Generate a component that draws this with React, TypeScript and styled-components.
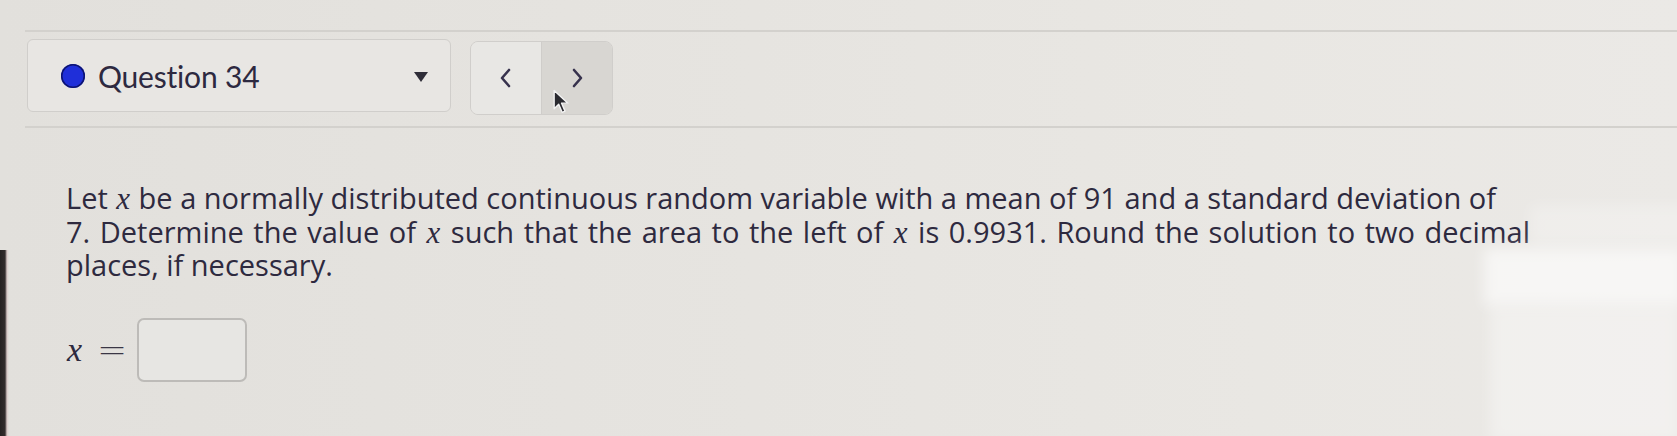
import React from "react";
import styled, { createGlobalStyle } from "styled-components";

const GlobalStyle = createGlobalStyle`
  html, body {
    margin: 0;
    padding: 0;
  }
  body {
    position: relative;
    width: 1677px;
    height: 436px;
    overflow: hidden;
    font-family: "Open Sans", "Lato", sans-serif;
    color: #2e2a3f;
    background:
      linear-gradient(90deg, #262222 0, #332d2d 5px, rgba(215,190,190,0.6) 7px, rgba(0,0,0,0) 9px) 0 250px / 10px 186px no-repeat,
      linear-gradient(90deg, #e2e0dc 0%, #e6e4e0 45%, #e9e7e3 75%, #ebe9e6 100%);
  }
`;

const Page = styled.div`
  padding-top: 30px;
`;

const Rule = styled.div<{ $gap: number }>`
  height: 2px;
  margin: 0 0 ${p => p.$gap}px 25px;
  background: #d3d1cd;
`;

const Toolbar = styled.div`
  display: flex;
  align-items: flex-start;
  gap: 19px;
  padding-left: 27px;
  margin-bottom: 11px;
`;

const Dropdown = styled.div`
  box-sizing: border-box;
  width: 424px;
  height: 73px;
  display: flex;
  align-items: center;
  padding: 0 22px 0 33px;
  border: 1.5px solid #d0cecb;
  border-radius: 6px;
  background: #e8e6e3;
`;

const StatusDot = styled.span`
  width: 24px;
  height: 24px;
  border-radius: 50%;
  background: #1f2fd9;
  box-shadow: inset 0 0 0 1.5px #0d1470;
  flex: none;
`;

const QuestionLabel = styled.span`
  margin-left: 13px;
  font-family: "Lato", sans-serif;
  font-size: 30px;
  letter-spacing: -0.2px;
  color: #2d2940;
  flex: 1;
`;

const Caret = styled.span`
  width: 0;
  height: 0;
  border-left: 7px solid transparent;
  border-right: 7px solid transparent;
  border-top: 10px solid #2f2d38;
  margin-top: 2px;
`;

const NavGroup = styled.div`
  position: relative;
  box-sizing: border-box;
  margin-top: 2px;
  width: 143px;
  height: 74px;
  display: flex;
  border: 1.5px solid #d0cecb;
  border-radius: 8px;
  overflow: hidden;
`;

const NavButton = styled.div<{ $active?: boolean }>`
  flex: 1;
  display: flex;
  align-items: center;
  justify-content: center;
  background: ${p => (p.$active ? "#d8d6d2" : "#e8e7e4")};
  & + & {
    border-left: 1.5px solid #cfcdca;
  }
`;

const Cursor = styled.svg`
  position: absolute;
  left: 82px;
  top: 47px;
`;

const QuestionText = styled.p`
  margin: 53px 0 0 66px;
  width: 1560px;
  font-size: 29px;
  line-height: 33.5px;
  color: #2e2a3f;
`;

const Line = styled.span<{ $spread?: number }>`
  word-spacing: ${p => p.$spread ?? 0}px;
`;

const MathVar = styled.span<{ $size?: number }>`
  font-family: "Liberation Serif", "DejaVu Serif", serif;
  font-style: italic;
  font-size: ${p => p.$size ?? 31}px;
  line-height: 1;
  padding: 0 1px;
`;

const AnswerRow = styled.div`
  display: flex;
  align-items: center;
  margin: 36px 0 0 66px;
`;

const Equals = styled.span`
  font-family: "DejaVu Sans", sans-serif;
  font-size: 36px;
  line-height: 1;
  font-weight: 300;
  margin: 0 10px 0 14px;
  color: #3a3645;
`;

const AnswerBox = styled.div`
  box-sizing: border-box;
  width: 110px;
  height: 64px;
  border: 2px solid #bdbbb8;
  border-radius: 7px;
  background: #e7e6e3;
`;

const Glare = styled.div<{ $x: number; $y: number; $w: number; $h: number; $o: number }>`
  position: absolute;
  left: ${p => p.$x}px;
  top: ${p => p.$y}px;
  width: ${p => p.$w}px;
  height: ${p => p.$h}px;
  background: rgba(255, 255, 255, ${p => p.$o});
  filter: blur(7px);
  pointer-events: none;
`;

function Chevron({ dir }: { dir: "left" | "right" }) {
  return (
    <svg width="16" height="22" viewBox="0 0 16 22">
      <path
        d={dir === "left" ? "M11 3 L4 11 L11 19" : "M5 3 L12 11 L5 19"}
        fill="none"
        stroke="#37324d"
        strokeWidth="2.6"
        strokeLinecap="round"
        strokeLinejoin="round"
      />
    </svg>
  );
}

export default function App() {
  return (
    <>
      <GlobalStyle />
      <Page>
        <Rule $gap={7} />
        <Toolbar>
          <Dropdown>
            <StatusDot />
            <QuestionLabel>Question 34</QuestionLabel>
            <Caret />
          </Dropdown>
          <NavGroup>
            <NavButton>
              <Chevron dir="left" />
            </NavButton>
            <NavButton $active>
              <Chevron dir="right" />
            </NavButton>
            <Cursor width="16" height="26" viewBox="0 0 14 22">
              <path
                d="M1 1 L1 17 L5 13 L8 20 L10.5 19 L7.5 12 L13 12 Z"
                fill="#2a2a30"
                stroke="#f2f2f2"
                strokeWidth="1.2"
                strokeLinejoin="round"
              />
            </Cursor>
          </NavGroup>
        </Toolbar>
        <Rule $gap={0} />
        <QuestionText>
          Let <MathVar>x</MathVar> be a normally distributed continuous random variable with a mean of 91 and a
          standard deviation of
          <br />
          <Line $spread={2}>
            7. Determine the value of <MathVar>x</MathVar> such that the area to the left of <MathVar>x</MathVar> is
            0.9931. Round the solution to two decimal
          </Line>
          <br />
          places, if necessary.
        </QuestionText>
        <AnswerRow>
          <MathVar $size={34}>x</MathVar>
          <Equals>=</Equals>
          <AnswerBox />
        </AnswerRow>
      </Page>
      <Glare $x={1530} $y={205} $w={160} $h={40} $o={0.25} />
      <Glare $x={1484} $y={248} $w={200} $h={58} $o={0.6} />
      <Glare $x={1490} $y={306} $w={190} $h={135} $o={0.35} />
    </>
  );
}
